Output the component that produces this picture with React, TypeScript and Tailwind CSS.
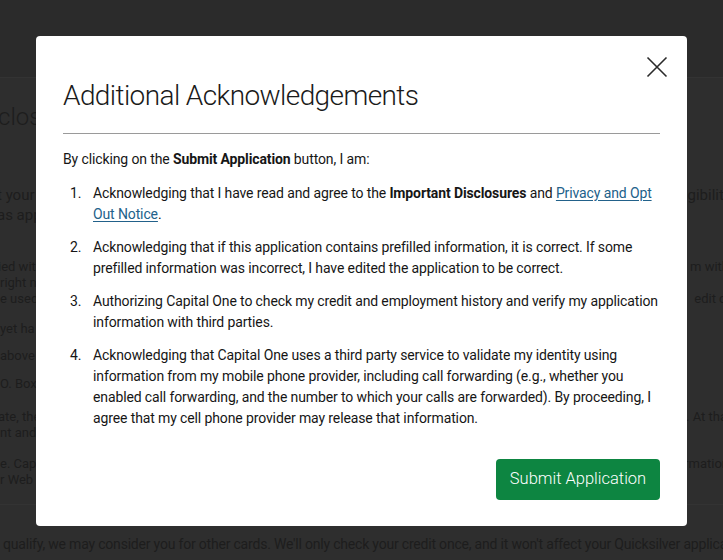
import React from "react";

export default function App() {
  return (
    <div
      className="relative w-[723px] h-[560px] overflow-hidden bg-[#2e2e2e]"
      style={{ fontFamily: "Roboto, 'Liberation Sans', sans-serif" }}
    >
      {/* Background page (dimmed) */}
      <div className="flex flex-col text-[#1d1d1d]">
        <div className="h-[78px] bg-[#2b2b2b] border-b border-[#333333]" />
        <div className="h-[28px] mt-[25px] flex items-center justify-between text-[24px] font-light leading-[28px]">
          <span className="-ml-[2px]">closu</span>
          <span />
        </div>
        <div className="h-[16px] mt-[56px] flex items-center justify-between text-[15px] leading-[16px]">
          <span className="-ml-[3px]">t your</span>
          <span className="-mr-[8px]">gibility</span>
        </div>
        <div className="h-[16px] mt-[4px] flex items-center justify-between text-[15px] leading-[16px]">
          <span className="-ml-[3px]">as app</span>
          <span />
        </div>
        <div className="h-[16px] mt-[36px] flex items-center justify-between text-[13px] leading-[16px]">
          <span className="-ml-[2px]">ied wit</span>
          <span className="-mr-[6px]">m with</span>
        </div>
        <div className="h-[16px] flex items-center justify-between text-[13px] leading-[16px]">
          <span>right n</span>
          <span />
        </div>
        <div className="h-[16px] flex items-center justify-between text-[13px] leading-[16px]">
          <span>e used</span>
          <span className="-mr-[10px]">edit ca</span>
        </div>
        <div className="h-[16px] mt-[14px] flex items-center justify-between text-[13px] leading-[16px]">
          <span>yet ha</span>
          <span />
        </div>
        <div className="h-[16px] mt-[11px] flex items-center justify-between text-[13px] leading-[16px]">
          <span>above</span>
          <span />
        </div>
        <div className="h-[16px] mt-[12px] flex items-center justify-between text-[13px] leading-[16px]">
          <span>O. Box</span>
          <span />
        </div>
        <div className="h-[16px] mt-[17px] flex items-center justify-between text-[13px] leading-[16px]">
          <span className="-ml-[2px]">ate, the</span>
          <span className="-mr-[4px]">. At tha</span>
        </div>
        <div className="h-[16px] flex items-center justify-between text-[13px] leading-[16px]">
          <span>nt and</span>
          <span />
        </div>
        <div className="h-[16px] mt-[15px] flex items-center justify-between text-[13px] leading-[16px]">
          <span>e. Cap</span>
          <span className="-mr-[6px]">rmation</span>
        </div>
        <div className="h-[16px] flex items-center justify-between text-[13px] leading-[16px]">
          <span>r Web</span>
          <span />
        </div>
        <div className="mt-[16px] border-b border-[#333333]" />
        <div className="h-[16px] mt-[31px] flex items-center text-[14px] tracking-[-0.2px] leading-[16px] whitespace-nowrap">
          <span className="ml-[3px]">
            qualify, we may consider you for other cards. We'll only check your credit once, and it won't affect your Quicksilver application
          </span>
        </div>
      </div>

      {/* Modal */}
      <div className="absolute left-[36px] top-[36px] w-[651px] h-[490px] bg-white rounded-[4px] px-[27px] text-[#161616]">
        <button className="absolute top-[20px] right-[19px] w-[22px] h-[22px] flex items-center justify-center">
          <svg width="22" height="22" viewBox="0 0 22 22" fill="none">
            <path d="M1.5 1.5 L20.5 20.5 M20.5 1.5 L1.5 20.5" stroke="#2a2a2a" strokeWidth="1.6" />
          </svg>
        </button>
        <h1 className="pt-[43px] text-[28px] leading-[34px] font-light tracking-[-0.6px] text-[#1a1a1a]">
          Additional Acknowledgements
        </h1>
        <div className="mt-[20px] h-px bg-[#9a9a9a]" />
        <div className="tracking-[-0.12px]">
          <p className="mt-[15px] text-[14px] leading-[21px]">
            By clicking on the <b className="font-bold">Submit Application</b> button, I am:
          </p>
          <ol className="mt-[13px] flex flex-col gap-[12px] text-[14px] leading-[21px]">
            <li className="flex">
              <span className="w-[30px] shrink-0 pl-[7px]">1.</span>
              <span>
                Acknowledging that I have read and agree to the <b className="font-bold">Important Disclosures</b> and{" "}
                <a className="text-[#22618a] underline underline-offset-2">Privacy and Opt Out Notice</a>.
              </span>
            </li>
            <li className="flex">
              <span className="w-[30px] shrink-0 pl-[7px]">2.</span>
              <span>
                Acknowledging that if this application contains prefilled information, it is correct. If some prefilled
                information was incorrect, I have edited the application to be correct.
              </span>
            </li>
            <li className="flex">
              <span className="w-[30px] shrink-0 pl-[7px]">3.</span>
              <span>
                Authorizing Capital One to check my credit and employment history and verify my application information
                with third parties.
              </span>
            </li>
            <li className="flex">
              <span className="w-[30px] shrink-0 pl-[7px]">4.</span>
              <span>
                Acknowledging that Capital One uses a third party service to validate my identity using information from
                my mobile phone provider, including call forwarding (e.g., whether you enabled call forwarding, and the
                number to which your calls are forwarded). By proceeding, I agree that my cell phone provider may release
                that information.
              </span>
            </li>
          </ol>
        </div>
        <div className="mt-[30px] flex justify-end">
          <button className="w-[164px] h-[41px] rounded-[4px] bg-[#0d8541] text-white text-[16.5px] font-light flex items-center justify-center">
            Submit Application
          </button>
        </div>
      </div>
    </div>
  );
}
